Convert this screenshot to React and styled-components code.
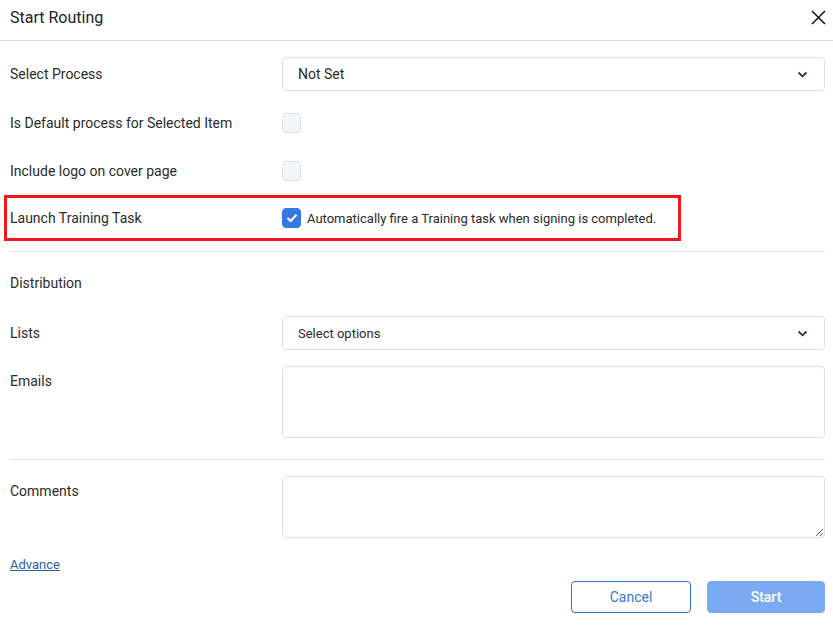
import React from 'react';
import styled, { createGlobalStyle } from 'styled-components';

const GlobalStyle = createGlobalStyle`
  body {
    margin: 0;
    background: #fff;
    font-family: Roboto, "Liberation Sans", sans-serif;
    color: #2b2b2b;
  }
`;

const Dialog = styled.div`
  width: 833px;
  height: 638px;
  background: #fff;
`;

const Header = styled.header`
  height: 41px;
  box-sizing: border-box;
  border-bottom: 1px solid #dcdcdc;
  display: flex;
  align-items: center;
  justify-content: space-between;
  padding: 0 5px 6px 10px;
`;

const Title = styled.h2`
  margin: 0;
  font-size: 16px;
  font-weight: 400;
  color: #222;
`;

const CloseButton = styled.button`
  border: none;
  background: transparent;
  padding: 0;
  width: 20px;
  height: 20px;
  display: flex;
  align-items: center;
  justify-content: center;
  cursor: pointer;
`;

const Body = styled.div`
  padding: 16px 8px 0 10px;
  display: flex;
  flex-direction: column;
`;

const Row = styled.div`
  display: grid;
  grid-template-columns: 272px 1fr;
  align-items: ${(p) => (p.top ? 'start' : 'center')};
  min-height: ${(p) => p.height || 0}px;
  margin-top: ${(p) => p.gap || 0}px;
`;

const HighlightRow = styled(Row)`
  border: 3px solid #f0141c;
  margin-left: -6px;
  width: 677px;
  box-sizing: border-box;
  padding-left: 3px;
  height: 46px;
`;

const Label = styled.label`
  font-size: 14px;
  line-height: 20px;
  color: #2b2b2b;
  padding-top: ${(p) => (p.top ? 5 : 0)}px;
`;

const Section = styled.div`
  font-size: 14px;
  line-height: 30px;
  margin-top: 16px;
  color: #2b2b2b;
`;

const SelectBox = styled.div`
  height: 34px;
  box-sizing: border-box;
  border: 1px solid #dedfe2;
  border-radius: 4px;
  display: flex;
  align-items: center;
  justify-content: space-between;
  padding: 0 16px 0 15px;
  font-size: ${(p) => p.size || 14}px;
  color: #2b2b2b;
`;

const TextBox = styled.div`
  height: ${(p) => p.height}px;
  box-sizing: border-box;
  border: 1px solid #dedfe2;
  border-radius: 4px;
`;

const TextArea = styled.textarea`
  display: block;
  height: ${(p) => p.height}px;
  width: 100%;
  box-sizing: border-box;
  border: 1px solid #dedfe2;
  border-radius: 4px;
  resize: vertical;
  font-family: inherit;
  font-size: 13px;
  outline: none;
`;

const CheckLine = styled.div`
  display: flex;
  align-items: center;
  gap: 6px;
  font-size: 13px;
  color: #2b2b2b;
`;

const Box = styled.span`
  width: 19px;
  height: 20px;
  box-sizing: border-box;
  border-radius: 4px;
  display: flex;
  align-items: center;
  justify-content: center;
  background: ${(p) => (p.checked ? '#3479e3' : '#f4f5f8')};
  border: 1px solid ${(p) => (p.checked ? '#3479e3' : '#dfe2e7')};
`;

const Divider = styled.hr`
  border: none;
  border-top: 1px solid #e2e2e2;
  margin: ${(p) => p.gap}px 0 0;
  height: 0;
`;

const Link = styled.a`
  font-size: 13px;
  line-height: 20px;
  color: #2d5da8;
  text-decoration: underline;
  margin-top: 17px;
  align-self: flex-start;
  cursor: pointer;
`;

const Footer = styled.div`
  display: flex;
  justify-content: flex-end;
  gap: 16px;
  margin-top: 6px;
`;

const Button = styled.button`
  height: 32px;
  width: ${(p) => p.w}px;
  box-sizing: border-box;
  border-radius: 4px;
  font-family: inherit;
  font-size: 14px;
  font-weight: ${(p) => (p.primary ? 500 : 400)};
  cursor: pointer;
  background: ${(p) => (p.primary ? '#7aaaf2' : '#fff')};
  color: ${(p) => (p.primary ? '#fff' : '#3b78d4')};
  border: 1px solid ${(p) => (p.primary ? '#7aaaf2' : '#3a70c8')};
`;

const Chevron = () => (
  <svg width="11" height="7" viewBox="0 0 11 7">
    <path d="M1.5 1.5 L5.5 5.3 L9.5 1.5" fill="none" stroke="#3a2e26" strokeWidth="1.8" />
  </svg>
);

const Checkbox = ({ checked }) => (
  <Box checked={checked}>
    {checked && (
      <svg width="12" height="10" viewBox="0 0 12 10">
        <path d="M1.5 5 L4.6 8 L10.5 1.8" fill="none" stroke="#fff" strokeWidth="2" />
      </svg>
    )}
  </Box>
);

export default function App() {
  return (
    <Dialog>
      <GlobalStyle />
      <Header>
        <Title>Start Routing</Title>
        <CloseButton>
          <svg width="15" height="15" viewBox="0 0 15 15">
            <path d="M1 1 L14 14 M14 1 L1 14" stroke="#111" strokeWidth="1.5" />
          </svg>
        </CloseButton>
      </Header>
      <Body>
        <Row>
          <Label>Select Process</Label>
          <SelectBox>
            Not Set
            <Chevron />
          </SelectBox>
        </Row>
        <Row height={48} gap={8}>
          <Label>Is Default process for Selected Item</Label>
          <Checkbox />
        </Row>
        <Row height={48}>
          <Label>Include logo on cover page</Label>
          <Checkbox />
        </Row>
        <HighlightRow>
          <Label>Launch Training Task</Label>
          <CheckLine>
            <Checkbox checked />
            Automatically fire a Training task when signing is completed.
          </CheckLine>
        </HighlightRow>
        <Divider gap={10} />
        <Section>Distribution</Section>
        <Row gap={18}>
          <Label>Lists</Label>
          <SelectBox size={13}>
            Select options
            <Chevron />
          </SelectBox>
        </Row>
        <Row gap={16} top>
          <Label top>Emails</Label>
          <TextBox height={72} />
        </Row>
        <Divider gap={21} />
        <Row gap={16} top>
          <Label top>Comments</Label>
          <TextArea height={62} />
        </Row>
        <Link>Advance</Link>
        <Footer>
          <Button w={120}>Cancel</Button>
          <Button w={118} primary>Start</Button>
        </Footer>
      </Body>
    </Dialog>
  );
}
